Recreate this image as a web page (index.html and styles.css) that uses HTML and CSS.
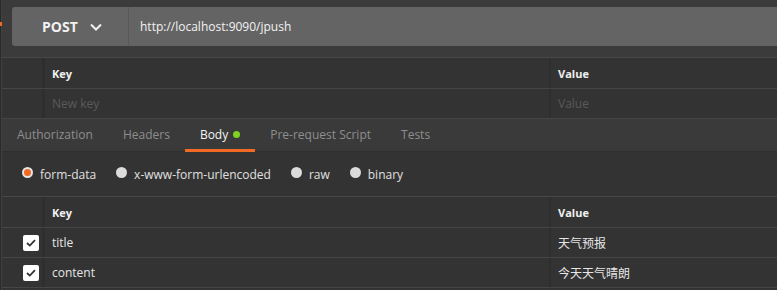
FILE: index.html
```html
<!DOCTYPE html>
<html>
<head>
    <title>Request Builder</title>
    <meta charset="UTF-8">
    <meta name="viewport" content="width=device-width, initial-scale=1.0">
    <link rel="stylesheet" href="styles.css">
</head>
<body>
    <div class="app">
        <div class="edge"><span class="edge-mark"></span></div>

        <div class="main">
            <div class="url-area">
                <div class="url-bar">
                    <div class="method">
                        POST
                        <svg class="chevron" width="12" height="8" viewBox="0 0 12 8">
                            <path d="M1 1.5 L6 6.5 L11 1.5" fill="none" stroke="#f0f0f0" stroke-width="2"/>
                        </svg>
                    </div>
                    <div class="url">http://localhost:9090/jpush</div>
                </div>
            </div>

            <div class="kv-table">
                <div class="kv-row head">
                    <div class="cell check"></div>
                    <div class="cell key">Key</div>
                    <div class="cell value">Value</div>
                </div>
                <div class="kv-row">
                    <div class="cell check"></div>
                    <div class="cell key placeholder">New key</div>
                    <div class="cell value placeholder">Value</div>
                </div>
            </div>

            <div class="tabs">
                <div class="tab">Authorization</div>
                <div class="tab">Headers</div>
                <div class="tab active">Body <span class="dot"></span></div>
                <div class="tab">Pre-request Script</div>
                <div class="tab">Tests</div>
            </div>

            <div class="body-types">
                <label class="radio selected"><span class="circle"></span>form-data</label>
                <label class="radio"><span class="circle"></span>x-www-form-urlencoded</label>
                <label class="radio"><span class="circle"></span>raw</label>
                <label class="radio"><span class="circle"></span>binary</label>
            </div>

            <div class="kv-table">
                <div class="kv-row head">
                    <div class="cell check"></div>
                    <div class="cell key">Key</div>
                    <div class="cell value">Value</div>
                </div>
                <div class="kv-row">
                    <div class="cell check">
                        <span class="checkbox">
                            <svg width="10" height="8" viewBox="0 0 10 8"><path d="M1 4 L3.8 6.6 L9 1.2" fill="none" stroke="#333" stroke-width="1.8"/></svg>
                        </span>
                    </div>
                    <div class="cell key">title</div>
                    <div class="cell value">天气预报</div>
                </div>
                <div class="kv-row">
                    <div class="cell check">
                        <span class="checkbox">
                            <svg width="10" height="8" viewBox="0 0 10 8"><path d="M1 4 L3.8 6.6 L9 1.2" fill="none" stroke="#333" stroke-width="1.8"/></svg>
                        </span>
                    </div>
                    <div class="cell key">content</div>
                    <div class="cell value">今天天气晴朗</div>
                </div>
            </div>
        </div>
    </div>
</body>
</html>
```

FILE: styles.css
```css
body {
    margin: 0;
    background-color: #333333;
    font-family: "Open Sans", "Noto Sans CJK SC", sans-serif;
    font-size: 12px;
    color: #e6e6e6;
    overflow: hidden;
}
.app {
    display: flex;
    height: 290px;
}
.edge {
    width: 2px;
    flex-shrink: 0;
    background-color: #2a2a2a;
    border-right: 1px solid #404040;
    padding-top: 22px;
    box-sizing: border-box;
}
.edge-mark {
    display: block;
    width: 2px;
    height: 4px;
    background-color: #f06a24;
}
.main {
    flex: 1;
    min-width: 0;
}
.url-area {
    background-color: #3b3b3b;
    padding: 7px 0 11px 10px;
}
.url-bar {
    display: flex;
    height: 39px;
    background-color: #646464;
    border-radius: 3px 0 0 3px;
}
.method {
    width: 86px;
    padding-left: 30px;
    border-right: 1px solid #595959;
    display: flex;
    align-items: center;
    font-size: 14px;
    font-weight: bold;
    color: #f2f2f2;
}
.chevron {
    margin-left: 12px;
}
.url {
    display: flex;
    align-items: center;
    padding-left: 11px;
    font-size: 12px;
    color: #f2f2f2;
}
.kv-table {
    border-top: 1px solid #474747;
}
.kv-row {
    display: flex;
    height: 29px;
    border-bottom: 1px solid #454545;
}
.kv-row.head {
    height: 30px;
}
.cell {
    display: flex;
    align-items: center;
    box-sizing: border-box;
}
.check {
    width: 43px;
    border-right: 3px solid #2e2e2e;
    justify-content: flex-end;
    padding-right: 3px;
    flex-shrink: 0;
}
.key {
    width: 506px;
    padding-left: 7px;
    border-right: 2px solid #2e2e2e;
    flex-shrink: 0;
}
.value {
    flex: 1;
    padding-left: 7px;
}
.head .cell {
    font-size: 11px;
    font-weight: bold;
    color: #f0f0f0;
}
.placeholder {
    color: #5a5a5a;
}
.tabs {
    display: flex;
    height: 32px;
    background-color: #3a3a3a;
    border-bottom: 1px solid #2f2f2f;
}
.tab {
    display: flex;
    align-items: center;
    padding: 0 15px;
    font-size: 12px;
    color: #8e8e8e;
    border-bottom: 3px solid transparent;
    margin-bottom: -1px;
}
.tab.active {
    color: #f5f5f5;
    border-bottom-color: #f06a24;
}
.dot {
    display: inline-block;
    width: 7px;
    height: 7px;
    border-radius: 50%;
    background-color: #7ed321;
    margin-left: 5px;
}
.body-types {
    display: flex;
    align-items: center;
    height: 44px;
    padding-left: 20px;
    gap: 20px;
}
.radio {
    display: flex;
    align-items: center;
    font-size: 12px;
    color: #e0e0e0;
}
.circle {
    width: 11px;
    height: 11px;
    border-radius: 50%;
    background-color: #dcdcdc;
    margin-right: 7px;
    margin-top: -3px;
    box-sizing: border-box;
}
.radio.selected .circle {
    background-color: #f06a24;
    border: 2px solid #e6e6e6;
}
.checkbox {
    display: flex;
    align-items: center;
    justify-content: center;
    width: 16px;
    height: 16px;
    border-radius: 2px;
    background-color: #ffffff;
}
```
